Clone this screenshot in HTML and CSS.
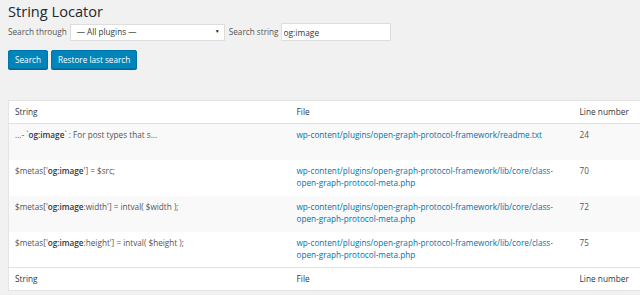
FILE: index.html
```html
<!DOCTYPE html>
<html lang="en">
<head>
  <meta charset="UTF-8">
  <meta name="viewport" content="width=device-width, initial-scale=1.0">
  <title>String Locator</title>
  <link rel="stylesheet" href="styles.css">
</head>
<body>
  <div class="wrap">
    <h1 class="page-title">String Locator</h1>

    <!-- Search form -->
    <form class="search-form">
      <div class="search-fields">
        <label class="field-label" for="string-locator-search">Search through</label>
        <div class="select-box" id="string-locator-search">
          <span>— All plugins —</span>
          <span class="select-arrow">▼</span>
        </div>
        <label class="field-label" for="string-locator-string">Search string</label>
        <input type="text" id="string-locator-string" class="text-input" value="og:image">
      </div>
      <div class="search-actions">
        <button type="button" class="button-primary">Search</button>
        <button type="button" class="button-primary">Restore last search</button>
      </div>
    </form>

    <!-- Results -->
    <table class="results-table">
      <colgroup>
        <col class="col-string">
        <col class="col-file">
        <col class="col-line">
      </colgroup>
      <thead>
        <tr>
          <th>String</th>
          <th>File</th>
          <th>Line number</th>
        </tr>
      </thead>
      <tbody>
        <tr class="alternate">
          <td>...- `<strong>og:image</strong>` : For post types that s...</td>
          <td><a href="#">wp-content/plugins/open-graph-protocol-framework/readme.txt</a></td>
          <td>24</td>
        </tr>
        <tr>
          <td>$metas['<strong>og:image</strong>'] = $src;</td>
          <td><a href="#">wp-content/plugins/open-graph-protocol-framework/lib/core/class-open-graph-protocol-meta.php</a></td>
          <td>70</td>
        </tr>
        <tr class="alternate">
          <td>$metas['<strong>og:image</strong>:width'] = intval( $width );</td>
          <td><a href="#">wp-content/plugins/open-graph-protocol-framework/lib/core/class-open-graph-protocol-meta.php</a></td>
          <td>72</td>
        </tr>
        <tr>
          <td>$metas['<strong>og:image</strong>:height'] = intval( $height );</td>
          <td><a href="#">wp-content/plugins/open-graph-protocol-framework/lib/core/class-open-graph-protocol-meta.php</a></td>
          <td>75</td>
        </tr>
      </tbody>
      <tfoot>
        <tr>
          <th>String</th>
          <th>File</th>
          <th>Line number</th>
        </tr>
      </tfoot>
    </table>
  </div>
</body>
</html>
```

FILE: styles.css
```css
/* Page */
body {
  margin: 0;
  background: #f1f1f1;
  color: #444;
  font-family: "Open Sans", sans-serif;
  font-size: 8.2px;
  line-height: 1.5;
  overflow: hidden;
}

.wrap {
  padding-left: 8px;
}

/* Title */
.page-title {
  margin: 0;
  padding-top: 2px;
  font-size: 14.6px;
  font-weight: 400;
  line-height: 19px;
  color: #23282d;
}

/* Search form */
.search-fields {
  display: flex;
  align-items: center;
  margin-top: 2px;
  height: 18px;
}

.field-label {
  margin-right: 3px;
  color: #555;
}

.select-box {
  display: flex;
  align-items: center;
  justify-content: space-between;
  box-sizing: border-box;
  width: 155px;
  height: 17px;
  margin-right: 4px;
  padding: 0 4px 0 6px;
  background: #fff;
  border: 1px solid #ddd;
  color: #32373c;
}

.select-arrow {
  font-size: 5px;
  color: #222;
}

.text-input {
  box-sizing: border-box;
  width: 110px;
  height: 18px;
  margin: 0 0 0 -1px;
  padding: 0 2px;
  background: #fff;
  border: 1px solid #ddd;
  font-family: "Open Sans", sans-serif;
  font-size: 8.4px;
  color: #32373c;
  outline: none;
}

.search-actions {
  display: flex;
  gap: 3px;
  margin-top: 9px;
}

.button-primary {
  box-sizing: border-box;
  height: 19px;
  padding: 0 6px;
  background: #0085ba;
  border: 1px solid #0073aa;
  border-radius: 2px;
  box-shadow: 0 1px 0 #006799;
  color: #fff;
  font-family: "Open Sans", sans-serif;
  font-size: 8.2px;
  cursor: pointer;
}

/* Results table */
.results-table {
  table-layout: fixed;
  width: 645px;
  margin-top: 31px;
  border-collapse: collapse;
  background: #fff;
  border: 1px solid #e5e5e5;
  box-shadow: 0 1px 1px rgba(0, 0, 0, 0.04);
}

.col-string {
  width: 282px;
}
.col-file {
  width: 283px;
}
.col-line {
  width: 80px;
}

.results-table th {
  height: 23px;
  box-sizing: border-box;
  padding: 0 6px;
  text-align: left;
  font-weight: 400;
  color: #32373c;
  font-size: 8.3px;
}

.results-table thead th {
  border-bottom: 1px solid #e1e1e1;
}
.results-table tfoot th {
  border-top: 1px solid #e1e1e1;
}

.results-table td {
  height: 36px;
  box-sizing: border-box;
  padding: 5px 6px;
  vertical-align: top;
  color: #555;
  line-height: 12.7px;
}

.results-table td strong {
  color: #32373c;
  font-weight: 600;
}

.results-table .alternate {
  background: #f9f9f9;
}

.results-table a {
  color: #0073aa;
  text-decoration: none;
}
```
